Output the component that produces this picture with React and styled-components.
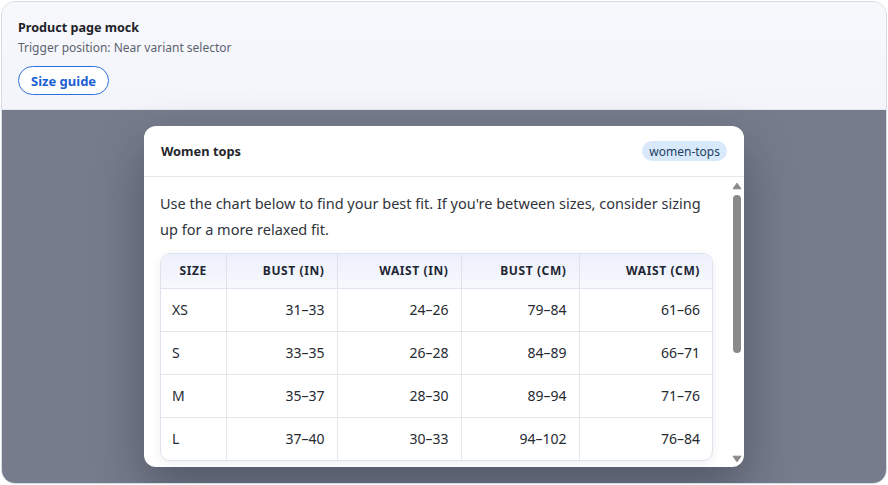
import React from "react";
import styled, { createGlobalStyle } from "styled-components";

const GlobalStyle = createGlobalStyle`
  html, body {
    margin: 0;
    padding: 0;
    background: #ffffff;
    font-family: "Noto Sans", "Open Sans", Arial, sans-serif;
  }
  * { box-sizing: border-box; }
`;

const Page = styled.div`
  padding: 1px;
  height: 485px;
`;

const Frame = styled.div`
  height: 483px;
  border: 1px solid #d6dce8;
  border-radius: 14px;
  overflow: hidden;
  display: flex;
  flex-direction: column;
`;

const ProductBar = styled.div`
  background: linear-gradient(180deg, #f7f8fc, #f3f5fb);
  padding: 17px 16px 14px 16px;
  border-bottom: 1px solid #e3e7f0;
  flex-shrink: 0;
`;

const Title = styled.div`
  font-size: 12.6px;
  font-weight: 700;
  line-height: 18px;
  color: #1f2329;
`;

const Sub = styled.div`
  margin-top: 2px;
  font-size: 12px;
  line-height: 18px;
  color: #5c6370;
`;

const GuideButton = styled.button`
  margin-top: 9px;
  height: 29px;
  padding: 0 12px;
  border: 1px solid #2f6fe0;
  border-radius: 999px;
  background: #ffffff;
  color: #1b5fd4;
  font-family: inherit;
  font-size: 13px;
  font-weight: 700;
`;

const Overlay = styled.div`
  flex: 1;
  min-height: 0;
  background: #767c8b;
  padding: 16px;
  display: flex;
  flex-direction: column;
  align-items: center;
`;

const Modal = styled.div`
  width: 600px;
  flex: 1 1 auto;
  min-height: 0;
  background: #ffffff;
  border-radius: 12px;
  box-shadow: 0 22px 50px rgba(15, 20, 35, 0.35);
  display: flex;
  flex-direction: column;
  overflow: hidden;
`;

const ModalHead = styled.div`
  display: flex;
  align-items: center;
  justify-content: space-between;
  height: 51px;
  padding: 0 17px;
  border-bottom: 1px solid #e6e8ed;
  flex-shrink: 0;
`;

const ModalTitle = styled.div`
  font-size: 12.8px;
  font-weight: 700;
  color: #23262b;
`;

const Badge = styled.span`
  display: inline-flex;
  align-items: center;
  height: 20px;
  padding: 0 7px;
  border-radius: 999px;
  background: #d7e9fb;
  color: #1f3f5f;
  font-size: 12px;
`;

const BodyRow = styled.div`
  flex: 1;
  min-height: 0;
  display: flex;
`;

const Content = styled.div`
  flex: 1;
  min-width: 0;
  overflow: hidden;
  padding: 13px 16px 16px 16px;
`;

const Rail = styled.div`
  width: 15px;
  flex-shrink: 0;
  display: flex;
  flex-direction: column;
  align-items: center;
  padding: 5px 0 4px 0;
  color: #8a8a8a;
`;

const Thumb = styled.div`
  width: 8px;
  height: 158px;
  margin-top: 5px;
  border-radius: 4px;
  background: #8a8a8a;
`;

const RailSpace = styled.div`
  flex: 1;
`;

const Arrow = styled.svg`
  display: block;
  width: 10px;
  height: 8px;
`;

const Intro = styled.p`
  margin: 0 0 11px 0;
  font-size: 14.5px;
  line-height: 26px;
  color: #30343b;
`;

const TableWrap = styled.div`
  border: 1px solid #dde2ec;
  border-radius: 10px;
  overflow: hidden;
  box-shadow: 0 3px 10px rgba(20, 30, 50, 0.07);
`;

const Table = styled.table`
  width: 100%;
  border-collapse: collapse;
  table-layout: fixed;
`;

const Th = styled.th`
  height: 34px;
  padding: 0 12px;
  background: linear-gradient(180deg, #edf0fb, #f6f8fd);
  border-bottom: 1px solid #dde2ec;
  border-left: 1px solid #dde2ec;
  font-size: 12px;
  font-weight: 700;
  letter-spacing: 0.05em;
  text-transform: uppercase;
  color: #1f2633;
  text-align: ${(p) => (p.$num ? "right" : "center")};
  &:first-child { border-left: none; }
`;

const Td = styled.td`
  height: 43px;
  padding: 0 12px 0 11px;
  border-top: 1px solid #e4e6ea;
  border-left: 1px solid #e4e6ea;
  font-size: 14px;
  color: #262a31;
  text-align: ${(p) => (p.$num ? "right" : "left")};
  &:first-child { border-left: none; }
`;

const columns = [
  { label: "Size", width: 65 },
  { label: "Bust (in)", width: 111, num: true },
  { label: "Waist (in)", width: 124, num: true },
  { label: "Bust (cm)", width: 118, num: true },
  { label: "Waist (cm)", num: true },
];

const rows = [
  ["XS", "31–33", "24–26", "79–84", "61–66"],
  ["S", "33–35", "26–28", "84–89", "66–71"],
  ["M", "35–37", "28–30", "89–94", "71–76"],
  ["L", "37–40", "30–33", "94–102", "76–84"],
];

// scrollbar arrows, slightly rounded triangles
const UpArrow = () => (
  <Arrow viewBox="0 0 10 8">
    <path
      d="M5 1.2 L9 6.8 L1 6.8 Z"
      fill="currentColor"
      stroke="currentColor"
      strokeWidth="1"
      strokeLinejoin="round"
    />
  </Arrow>
);

const DownArrow = () => (
  <Arrow viewBox="0 0 10 8">
    <path
      d="M1 1.2 L9 1.2 L5 6.8 Z"
      fill="currentColor"
      stroke="currentColor"
      strokeWidth="1"
      strokeLinejoin="round"
    />
  </Arrow>
);

export default function App() {
  return (
    <Page>
      <GlobalStyle />
      <Frame>
        <ProductBar>
          <Title>Product page mock</Title>
          <Sub>Trigger position: Near variant selector</Sub>
          <GuideButton>Size guide</GuideButton>
        </ProductBar>
        <Overlay>
          <Modal>
            <ModalHead>
              <ModalTitle>Women tops</ModalTitle>
              <Badge>women-tops</Badge>
            </ModalHead>
            <BodyRow>
              <Content>
                <Intro>
                  Use the chart below to find your best fit. If you're between
                  sizes, consider sizing up for a more relaxed fit.
                </Intro>
                <TableWrap>
                  <Table>
                    <colgroup>
                      {columns.map((c) => (
                        <col key={c.label} style={c.width ? { width: c.width } : undefined} />
                      ))}
                    </colgroup>
                    <thead>
                      <tr>
                        {columns.map((c) => (
                          <Th key={c.label} $num={c.num}>
                            {c.label}
                          </Th>
                        ))}
                      </tr>
                    </thead>
                    <tbody>
                      {rows.map((r) => (
                        <tr key={r[0]}>
                          {r.map((v, i) => (
                            <Td key={i} $num={i > 0}>
                              {v}
                            </Td>
                          ))}
                        </tr>
                      ))}
                    </tbody>
                  </Table>
                </TableWrap>
              </Content>
              <Rail>
                <UpArrow />
                <Thumb />
                <RailSpace />
                <DownArrow />
              </Rail>
            </BodyRow>
          </Modal>
        </Overlay>
      </Frame>
    </Page>
  );
}
